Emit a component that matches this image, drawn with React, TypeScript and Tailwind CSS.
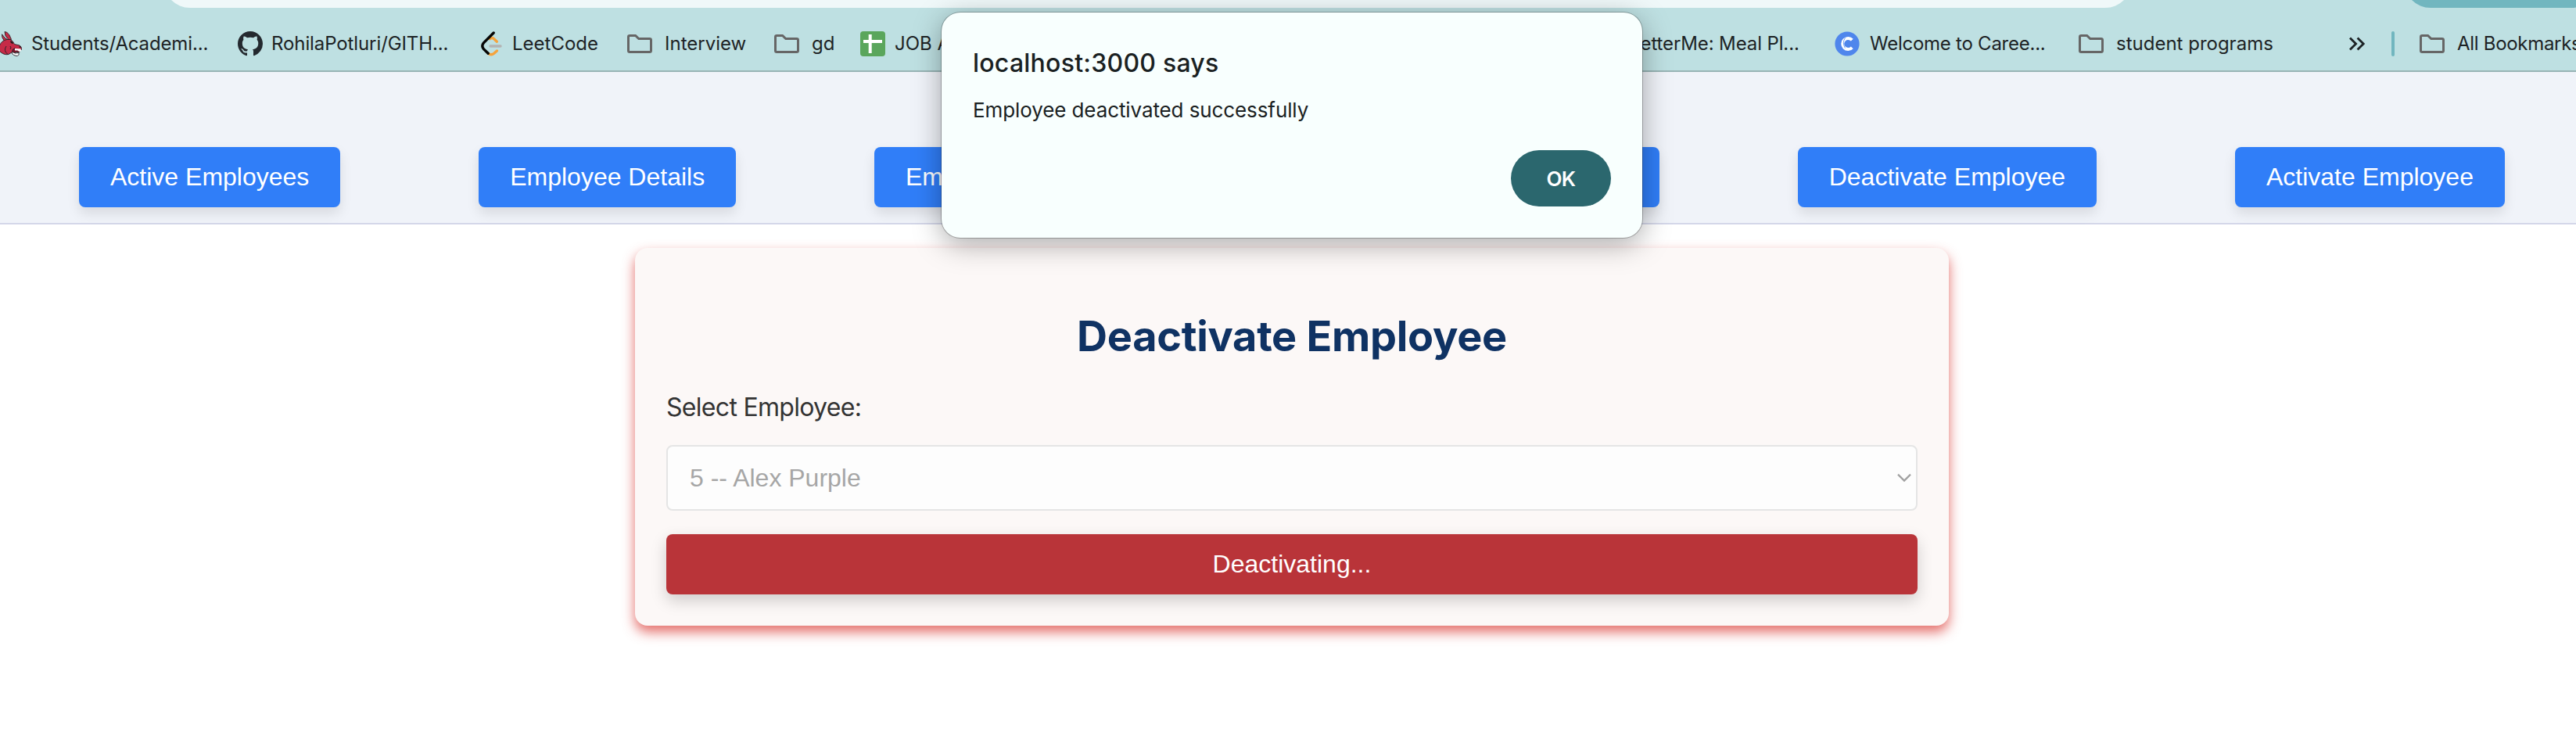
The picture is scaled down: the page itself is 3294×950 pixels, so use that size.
import type { ReactNode } from "react";

function Folder() {
  return (
    <svg width="40" height="32" viewBox="0 0 40 32" fill="none" className="shrink-0">
      <path
        d="M5.5 7.2Q5.5 5.5 7.2 5.5H14.6L18.8 9.6H32.8Q34.5 9.6 34.5 11.3V24.8Q34.5 26.5 32.8 26.5H7.2Q5.5 26.5 5.5 24.8Z"
        stroke="#666666"
        strokeWidth="3"
      />
    </svg>
  );
}

function Donkey() {
  return (
    <svg width="32" height="32" viewBox="0 0 32 32" className="shrink-0">
      <g stroke="#2b2328" strokeWidth="0.9" strokeLinejoin="round">
        <path d="M14.5 11Q10 9.5 6.5 3.8Q5.8 7.5 9.5 12.5Z" fill="#c62b47" />
        <path d="M15 10.5Q9.5 6 10 0.5Q13 .6 15.5 4Q17.5 7.5 18.5 10.5Z" fill="#c62b47" />
        <path
          d="M3 19Q6 11.5 13 10.5Q17 9.5 20 12.5L22.5 16.5L29 18Q32 19.5 31.5 23.5L29.5 25L22 22Q20 23 20.5 26L15 29.5Q9 31 3 25Z"
          fill="#c62b47"
        />
        <path d="M20.5 23L23 21.8L29.8 24.8L28.5 27L24.5 26.5L23.2 28.2L19.5 26Z" fill="#7a1529" />
        <path d="M20 26.5L23.5 28L28 27.5Q28.8 31.5 25 31.5Q21 31 19 28Z" fill="#ffffff" />
      </g>
      <path d="M23 22L30.5 22.4L31 25L29 26.3L26.5 24.6L23 24.4Z" fill="#ffffff" />
      <path d="M17.5 13L20.5 15.5" stroke="#1f1a1d" strokeWidth="1.8" />
      <path d="M28.5 19.6L30.4 20.6" stroke="#1f1a1d" strokeWidth="1.2" />
      <path d="M12 19Q8 25 14 29.5M17 19Q19 21 17 23" stroke="#2b2328" strokeWidth="1" fill="none" />
    </svg>
  );
}

function Github() {
  return (
    <svg width="32" height="32" viewBox="0 0 16 16" fill="#24292f" className="shrink-0">
      <path d="M8 0C3.58 0 0 3.58 0 8c0 3.54 2.29 6.53 5.47 7.59.4.07.55-.17.55-.38 0-.19-.01-.82-.01-1.49-2.01.37-2.53-.49-2.69-.94-.09-.23-.48-.94-.82-1.13-.28-.15-.68-.52-.01-.53.63-.01 1.08.58 1.23.82.72 1.21 1.87.87 2.33.66.07-.52.28-.87.51-1.07-1.78-.2-3.64-.89-3.64-3.95 0-.87.31-1.59.82-2.15-.08-.2-.36-1.02.08-2.12 0 0 .67-.21 2.2.82.64-.18 1.32-.27 2-.27.68 0 1.36.09 2 .27 1.53-1.04 2.2-.82 2.2-.82.44 1.1.16 1.92.08 2.12.51.56.82 1.27.82 2.15 0 3.07-1.87 3.75-3.65 3.95.29.25.54.73.54 1.48 0 1.07-.01 1.93-.01 2.2 0 .21.15.46.55.38A8.013 8.013 0 0016 8c0-4.42-3.58-8-8-8z" />
    </svg>
  );
}

function Leet() {
  return (
    <svg width="32" height="32" viewBox="0 0 32 32" fill="none" strokeWidth="3.4" strokeLinecap="round" className="shrink-0">
      <path d="M14.5 9.6Q17 7.6 19.5 9.6L23.4 13.2" stroke="#f5a33c" />
      <path d="M12.2 28.3Q16 31.4 19.8 28.3L23.4 25" stroke="#f5a33c" />
      <path d="M19.2 2L6.4 14.8Q3.2 18.6 6.4 22.6L12.2 28.3" stroke="#070706" />
      <path d="M15 19H28" stroke="#b3b3b3" />
    </svg>
  );
}

function Sheet() {
  return (
    <svg width="32" height="32" viewBox="0 0 32 32" className="shrink-0">
      <rect width="32" height="32" rx="4" fill="#5aa65c" />
      <path d="M12.7 4V28M4 13H28" stroke="#ffffff" strokeWidth="4" />
    </svg>
  );
}

function CareerC() {
  return (
    <svg width="32" height="32" viewBox="0 0 32 32" fill="none" className="shrink-0">
      <circle cx="16" cy="16" r="15.6" fill="#4f86ec" />
      <path d="M22.3 11.2A7 7 0 1 0 22.3 20.8" stroke="#ffffff" strokeWidth="4" />
      <path d="M13.6 8.4Q9.2 14 13.4 21.5" stroke="#4f86ec" strokeWidth="0.8" />
    </svg>
  );
}

function Bookmark({ icon, label, slot, text = "ml-3" }: { icon: ReactNode; label: string; slot: string; text?: string }) {
  return (
    <div className={`flex shrink-0 items-center whitespace-nowrap ${slot}`}>
      {icon}
      <span className={`leading-8 ${text}`}>{label}</span>
    </div>
  );
}

function Browser() {
  return (
    <header className="flex h-[92px] flex-col border-b-2 border-[#98b4b5] bg-[#bee0e2] text-2xl text-[#1d2325]">
      <div className="flex h-[10px] shrink-0 items-end overflow-hidden">
        <div className="ml-[209px] h-[68px] w-[2517px] shrink-0 rounded-full bg-[#eff8f9]" />
        <div className="ml-[348px] h-[68px] w-[248px] shrink-0 rounded-full bg-[#71b6bf]" />
      </div>
      <div className="mt-[30px] -ml-1 flex h-8 shrink-0 items-center">
        <Bookmark icon={<Donkey />} label="Students/Academi..." slot="w-[308px]" text="ml-3 tracking-[-0.14px]" />
        <Bookmark icon={<Github />} label="RohilaPotluri/GITH..." slot="w-[308px]" text="ml-[11px] tracking-[-0.1px]" />
        <Bookmark icon={<Leet />} label="LeetCode" slot="w-[186px]" text="ml-[11px]" />
        <Bookmark icon={<Folder />} label="Interview" slot="w-[188px]" text="ml-[12px]" />
        <Bookmark icon={<Folder />} label="gd" slot="w-[114px]" text="ml-[12px]" />
        <Bookmark icon={<Sheet />} label="JOB A" slot="w-[938px]" />
        <Bookmark icon={<span className="w-8" />} label="BetterMe: Meal Pl..." slot="w-[308px]" text="ml-3 tracking-[-0.12px]" />
        <Bookmark icon={<CareerC />} label="Welcome to Caree..." slot="w-[308px]" text="ml-[13px] tracking-[-0.25px]" />
        <Bookmark icon={<Folder />} label="student programs" slot="w-[348px]" text="ml-3" />
        <svg width="24" height="20" viewBox="0 0 24 20" fill="none" stroke="#1d2325" strokeWidth="2.8" className="shrink-0">
          <path d="M3 2.4L10.6 10L3 17.6M12.6 2.4L20.2 10L12.6 17.6" />
        </svg>
        <div className="ml-8 h-8 w-1 shrink-0 rounded-full bg-[#71b6bf]" />
        <div className="ml-7 flex shrink-0">
          <Bookmark icon={<Folder />} label="All Bookmarks" slot="w-[220px]" text="ml-3 tracking-[-0.3px]" />
        </div>
      </div>
    </header>
  );
}

function NavButton({ children, width = "" }: { children: ReactNode; width?: string }) {
  return (
    <button
      className={`h-[77px] rounded-lg bg-[#307ef8] px-10 pb-0.5 text-left whitespace-nowrap text-white shadow-[0_8px_16px_rgba(0,0,0,0.1)] ${width}`}
    >
      {children}
    </button>
  );
}

export default function App() {
  return (
    <div className="relative h-[950px] overflow-hidden bg-white font-[Inter,sans-serif]">
      <div className="w-[3304px]">
        <Browser />
        <nav className="flex h-[195px] items-end justify-between border-b-2 border-[#d4d7e9] bg-[#f0f3f9] px-[101px] pb-5 font-['Liberation_Sans',Arial,sans-serif] text-[32px]">
          <NavButton>Active Employees</NavButton>
          <NavButton>Employee Details</NavButton>
          <NavButton width="w-[414px]">Employee Registration</NavButton>
          <NavButton width="w-[413px]">Update</NavButton>
          <NavButton>Deactivate Employee</NavButton>
          <NavButton>Activate Employee</NavButton>
        </nav>

        <main className="mx-auto mt-[30px] flex h-[483px] w-[1680px] flex-col rounded-2xl bg-[#fcf8f7] px-10 pt-[81px] text-[32px] shadow-[0_8px_16px_rgba(216,50,44,0.7)]">
          <h2 className="text-center text-[54px] leading-[64px] font-bold tracking-[-0.29px] text-[#0f3263]">
            Deactivate Employee
          </h2>
          <label className="mt-[39px] leading-10 tracking-[-0.7px] text-[#333333]">Select Employee:</label>
          <div className="mt-7 flex h-21 shrink-0 items-center justify-between rounded-lg border-2 border-[#e5e5e5] bg-[#fdfdfd] pr-[5px] pl-7 font-['Liberation_Sans',Arial,sans-serif] text-[#a6a6a6]">
            <span>5 -- Alex Purple</span>
            <svg width="20" height="14" viewBox="0 0 20 14" fill="none" stroke="#a0a0a0" strokeWidth="2.2">
              <path d="M2 2.6L10 10.6L18 2.6" />
            </svg>
          </div>
          <button className="mt-[30px] h-[77px] shrink-0 rounded-lg bg-[#b93439] pb-0.5 font-['Liberation_Sans',Arial,sans-serif] text-white shadow-[0_8px_20px_rgba(0,0,0,0.18)]">
            Deactivating...
          </button>
        </main>
      </div>

      <div
        role="alertdialog"
        className="absolute top-4 left-[1204px] flex h-72 w-[896px] flex-col rounded-3xl bg-[#f8fffe] px-10 pt-[45px] text-[#1a2122] shadow-[0_0_0_1px_rgba(0,0,0,0.25),0_8px_36px_rgba(0,0,0,0.34)]"
      >
        <h1 className="text-[32px] leading-10 font-medium tracking-[0.24px]">localhost:3000 says</h1>
        <p className="mt-5 text-[26px] leading-10 tracking-[-0.1px]">Employee deactivated successfully</p>
        <button className="mt-[31px] h-[72px] w-32 self-end rounded-full bg-[#2b676e] text-[26px] font-semibold tracking-[-0.7px] text-white">
          OK
        </button>
      </div>
    </div>
  );
}
